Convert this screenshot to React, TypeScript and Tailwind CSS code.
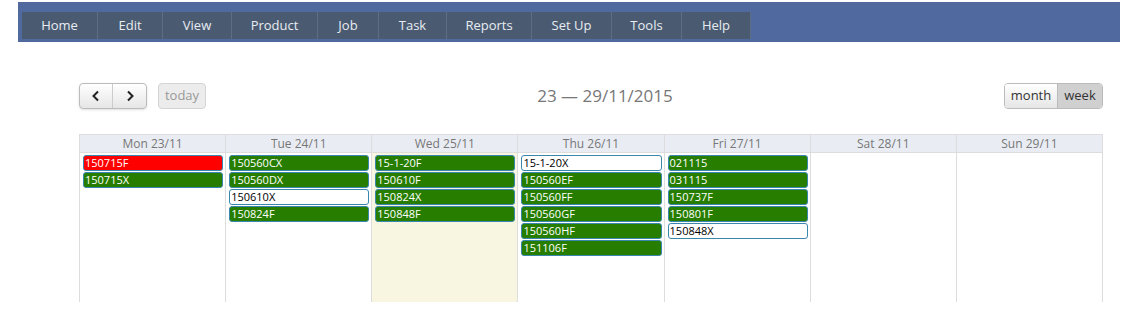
import React from "react";

const menu = [
  { label: "Home", w: "w-[76px]" },
  { label: "Edit", w: "w-[65px]" },
  { label: "View", w: "w-[69px]" },
  { label: "Product", w: "w-[86px]" },
  { label: "Job", w: "w-[61px]" },
  { label: "Task", w: "w-[68px]" },
  { label: "Reports", w: "w-[85px]" },
  { label: "Set Up", w: "w-[80px]" },
  { label: "Tools", w: "w-[70px]" },
  { label: "Help", w: "w-[69px]" },
];

type Ev = { t: string; c: "g" | "r" | "w" };

const days: { label: string; today?: boolean; events: Ev[] }[] = [
  { label: "Mon 23/11", events: [{ t: "150715F", c: "r" }, { t: "150715X", c: "g" }] },
  {
    label: "Tue 24/11",
    events: [
      { t: "150560CX", c: "g" },
      { t: "150560DX", c: "g" },
      { t: "150610X", c: "w" },
      { t: "150824F", c: "g" },
    ],
  },
  {
    label: "Wed 25/11",
    today: true,
    events: [
      { t: "15-1-20F", c: "g" },
      { t: "150610F", c: "g" },
      { t: "150824X", c: "g" },
      { t: "150848F", c: "g" },
    ],
  },
  {
    label: "Thu 26/11",
    events: [
      { t: "15-1-20X", c: "w" },
      { t: "150560EF", c: "g" },
      { t: "150560FF", c: "g" },
      { t: "150560GF", c: "g" },
      { t: "150560HF", c: "g" },
      { t: "151106F", c: "g" },
    ],
  },
  {
    label: "Fri 27/11",
    events: [
      { t: "021115", c: "g" },
      { t: "031115", c: "g" },
      { t: "150737F", c: "g" },
      { t: "150801F", c: "g" },
      { t: "150848X", c: "w" },
    ],
  },
  { label: "Sat 28/11", events: [] },
  { label: "Sun 29/11", events: [] },
];

function Event({ ev }: { ev: Ev }) {
  const color =
    ev.c === "g"
      ? "bg-[#267d00] text-white"
      : ev.c === "r"
      ? "bg-[#ff0000] text-white"
      : "bg-white text-black";
  return (
    <div
      className={`${color} h-[16px] mb-[1px] ml-[3px] mr-[2px] rounded-[3px] border border-[#3a87ad] pl-[1px] text-[11px] leading-[14px]`}
    >
      {ev.t}
    </div>
  );
}

export default function App() {
  return (
    <div className="w-[1125px] h-[320px] bg-white overflow-hidden" style={{ fontFamily: '"Open Sans", sans-serif' }}>
      {/* Top bar */}
      <div className="ml-[18px] mt-[2px] w-[1102px] h-[40px] bg-[#506aa0] pl-[4px] pt-[10px]">
        <div className="flex h-[27px] w-fit bg-[#4a5b71]">
          {menu.map((m) => (
            <div
              key={m.label}
              className={`${m.w} border-r border-[#5d6d82] flex items-center justify-center text-[13px] text-[#e8ecf2]`}
            >
              {m.label}
            </div>
          ))}
        </div>
      </div>

      {/* Calendar */}
      <div className="ml-[79px] w-[1024px] mt-[40px]">
        <div className="flex items-center h-[27px]">
          <div className="flex items-center">
            <div className="flex h-[26px] rounded-[4px] border border-[#bbb] bg-gradient-to-b from-white to-[#e6e6e6] shadow-sm">
              <div className="w-[33px] flex items-center justify-center border-r border-[#ccc]">
                <svg width="10" height="12" viewBox="0 0 10 12">
                  <path d="M7 1.5 L2.5 6 L7 10.5" stroke="#222" strokeWidth="2" fill="none" />
                </svg>
              </div>
              <div className="w-[33px] flex items-center justify-center">
                <svg width="10" height="12" viewBox="0 0 10 12">
                  <path d="M3 1.5 L7.5 6 L3 10.5" stroke="#222" strokeWidth="2" fill="none" />
                </svg>
              </div>
            </div>
            <div className="ml-[11px] h-[26px] w-[48px] rounded-[4px] border border-[#d4d4d4] bg-[#ececec] flex items-center justify-center text-[13px] text-[#999]">
              today
            </div>
          </div>
          <div className="flex-1 text-center text-[17px] text-[#777]">23 — 29/11/2015</div>
          <div className="flex h-[26px] rounded-[4px] border border-[#bbb] overflow-hidden text-[13px] text-[#333]">
            <div className="w-[53px] flex items-center justify-center bg-gradient-to-b from-white to-[#e6e6e6] border-r border-[#bbb]">
              month
            </div>
            <div className="w-[44px] flex items-center justify-center bg-[#d0d0d0]">week</div>
          </div>
        </div>

        <div className="mt-[25px] border-l border-t border-[#ddd] grid grid-cols-7 w-[1024px]">
          {days.map((d) => (
            <div key={d.label} className="border-r border-[#ddd] flex flex-col">
              <div className="h-[18px] bg-[#e9edf3] border-b border-[#ddd] text-center text-[12px] leading-[17px] text-[#777]">
                {d.label}
              </div>
              <div className={`h-[149px] pt-[2px] ${d.today ? "bg-[#f8f6e1]" : "bg-white"}`}>
                {d.events.map((ev) => (
                  <Event key={ev.t} ev={ev} />
                ))}
              </div>
            </div>
          ))}
        </div>
      </div>
    </div>
  );
}
